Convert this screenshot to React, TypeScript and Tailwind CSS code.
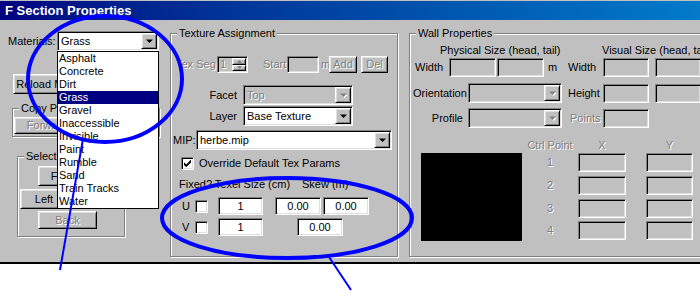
const sunken =
  "border border-t-[#808080] border-l-[#808080] border-r-white border-b-white shadow-[inset_1px_1px_0_#000,inset_-1px_-1px_0_#dfdfdf]";
const raised =
  "border border-t-white border-l-white border-r-black border-b-black shadow-[inset_1px_1px_0_#dfdfdf,inset_-1px_-1px_0_#808080]";
const etched = "border border-[#808080] shadow-[inset_1px_1px_0_#fff,1px_1px_0_#fff]";
const dim = "text-[#808080] [text-shadow:1px_1px_0_#fff]";

const materials = [
  "Asphalt",
  "Concrete",
  "Dirt",
  "Grass",
  "Gravel",
  "Inaccessible",
  "Invisible",
  "Paint",
  "Rumble",
  "Sand",
  "Train Tracks",
  "Water",
];

const Tri = ({ off, up }: { off?: boolean; up?: boolean }) => (
  <svg width="7" height="5" viewBox="0 0 7 5" className="block">
    {off && <path d={up ? "M4.5 1L8 4.5H1z" : "M1 1.5h7L4.5 5z"} fill="#fff" />}
    <path d={up ? "M3.5 0L7 3.5H0z" : "M0 0.5h7L3.5 4z"} fill={off ? "#808080" : "#000"} />
  </svg>
);

const Combo = ({ text, off, className = "" }: { text: string; off?: boolean; className?: string }) => (
  <div className={`flex h-[20px] p-px ${sunken} ${off ? "bg-[#c0c0c0]" : "bg-white"} ${className}`}>
    <span className={`flex-1 truncate pl-[2px] leading-[16px] ${off ? dim : ""}`}>{text}</span>
    <div className={`flex w-[16px] items-center justify-center ${raised} bg-[#c0c0c0]`}>
      <Tri off={off} />
    </div>
  </div>
);

const Edit = ({ value = "", off, className = "" }: { value?: string; off?: boolean; className?: string }) => (
  <div
    className={`flex items-center justify-center ${sunken} ${off ? "bg-[#c0c0c0]" : "bg-white"} ${className}`}
  >
    {value}
  </div>
);

const Btn = ({ label, off, className = "" }: { label: string; off?: boolean; className?: string }) => (
  <div className={`flex items-center justify-center bg-[#c0c0c0] ${raised} ${off ? dim : ""} ${className}`}>
    {label}
  </div>
);

const Check = ({ on }: { on?: boolean }) => (
  <div className={`flex h-[13px] w-[13px] shrink-0 items-center justify-center bg-white ${sunken}`}>
    {on && (
      <svg width="7" height="7" viewBox="0 0 7 7">
        <path d="M0 2.2L2.2 4.4 7 -0.4V2.4L2.2 7.2 0 5z" fill="#000" />
      </svg>
    )}
  </div>
);

const Group = ({ label, className = "", children }: { label: string; className?: string; children: React.ReactNode }) => (
  <div className={`relative shrink-0 ${etched} ${className}`}>
    <span className="absolute left-[6px] top-[-7px] bg-[#c0c0c0] px-[2px] leading-[13px] whitespace-nowrap">
      {label}
    </span>
    {children}
  </div>
);

export default function App() {
  return (
    <div className="relative h-[306px] w-[700px] overflow-hidden bg-white font-['Liberation_Sans',Arial,sans-serif] text-[11px] leading-[13px] text-black">
      <div className="w-[760px] bg-[#c0c0c0] pt-px">
        <div className="flex h-[19px] items-center bg-linear-to-r from-[#000080] to-[#1084d0] pl-[5px] text-[13px] font-bold text-white">
          F Section Properties
        </div>

        <div className="flex h-[244px] border-b-2 border-black">
          {/* left column */}
          <div className="flex w-[170px] shrink-0 flex-col">
            <div className="mt-[11px] flex h-[20px] items-center">
              <span className="ml-[8px] w-[49px]">Materials:</span>
              <div className="relative w-[102px]">
                <Combo text="Grass" />
                <div className="absolute left-0 top-full z-10 w-full border border-black bg-white">
                  {materials.map((m) => (
                    <div
                      key={m}
                      className={`h-[13px] pl-px leading-[13px] whitespace-nowrap ${
                        m === "Grass" ? "bg-[#000080] text-white" : ""
                      }`}
                    >
                      {m}
                    </div>
                  ))}
                </div>
              </div>
            </div>

            <Btn label="Reload Materials" className="ml-[13px] mt-[23px] h-[20px] w-[89px]" />

            <Group label="Copy Properties" className="ml-[12px] mt-[14px] h-[29px] w-[148px]">
              <div className="flex pl-px pt-[8px]">
                <Btn label="Forward" off className="h-[17px] w-[66px]" />
                <Btn label="Backward" off className="h-[17px] w-[66px]" />
              </div>
            </Group>

            <Group label="Select Side" className="ml-[17px] mt-[19px] h-[81px] w-[108px]">
              <div className="flex flex-col pt-[9px]">
                <Btn label="Front" className="ml-[20px] h-[20px] w-[59px] pr-[8px]" />
                <div className="mt-[3px] flex pl-[2px]">
                  <Btn label="Left" className="h-[20px] w-[48px]" />
                  <Btn label="Right" className="h-[20px] w-[50px]" />
                </div>
                <Btn label="Back" off className="ml-[20px] mt-[2px] h-[18px] w-[59px]" />
              </div>
            </Group>
          </div>

          {/* texture assignment */}
          <Group label="Texture Assignment" className="mt-[13px] h-[224px] w-[228px]">
            <div className="flex flex-col">
              <div className="mt-[22px] flex h-[17px] items-center">
                <span className={`ml-[5px] w-[41px] ${dim}`}>Tex Seg</span>
                <div className={`flex h-[17px] w-[31px] p-px bg-[#c0c0c0] ${sunken}`}>
                  <span className={`flex-1 pl-px leading-[13px] ${dim}`}>1</span>
                  <div className="flex w-[14px] flex-col">
                    <div className={`flex flex-1 items-center justify-center ${raised}`}>
                      <svg width="5" height="3" viewBox="0 0 5 3"><path d="M2.5 0L5 3H0z" fill="#808080" /></svg>
                    </div>
                    <div className={`flex flex-1 items-center justify-center ${raised}`}>
                      <svg width="5" height="3" viewBox="0 0 5 3"><path d="M0 0h5L2.5 3z" fill="#808080" /></svg>
                    </div>
                  </div>
                </div>
                <span className={`ml-[15px] w-[24px] ${dim}`}>Start</span>
                <Edit off className="h-[17px] w-[32px]" />
                <span className={`ml-[2px] w-[8px] ${dim}`}>m</span>
                <Btn label="Add" off className="h-[17px] w-[28px]" />
                <Btn label="Del" off className="ml-[4px] h-[17px] w-[27px]" />
              </div>

              <div className="mt-[12px] flex h-[20px] items-center">
                <span className="w-[66px] text-right">Facet</span>
                <Combo text="Top" off className="ml-[6px] w-[110px]" />
              </div>
              <div className="mt-px flex h-[20px] items-center">
                <span className="w-[66px] text-right">Layer</span>
                <Combo text="Base Texture" className="ml-[6px] w-[110px]" />
              </div>
              <div className="mt-[4px] flex h-[20px] items-center">
                <span className="ml-[2px] w-[23px]">MIP:</span>
                <Combo text="herbe.mip" className="w-[196px]" />
              </div>

              <div className="mt-[7px] flex h-[13px] items-center">
                <div className="ml-[10px]">
                  <Check on />
                </div>
                <span className="ml-[5px] whitespace-nowrap">Override Default Tex Params</span>
              </div>

              <div className="mt-[8px] flex h-[13px] items-center whitespace-nowrap">
                <span className="ml-[8px] w-[123px]">Fixed? Texel Size (cm)</span>
                <span>Skew (m)</span>
              </div>

              <div className="mt-[6px] flex h-[18px] items-center">
                <span className="ml-[11px] w-[13px]">U</span>
                <Check />
                <Edit value="1" className="ml-[10px] h-[18px] w-[45px]" />
                <Edit value="0.00" className="ml-[12px] h-[18px] w-[46px]" />
                <Edit value="0.00" className="ml-[2px] h-[18px] w-[46px]" />
              </div>
              <div className="mt-[3px] flex h-[18px] items-center">
                <span className="ml-[11px] w-[13px]">V</span>
                <Check />
                <Edit value="1" className="ml-[10px] h-[18px] w-[45px]" />
                <Edit value="0.00" className="ml-[34px] h-[18px] w-[46px]" />
              </div>
            </div>
          </Group>

          {/* wall properties */}
          <Group label="Wall Properties" className="ml-[11px] mt-[13px] h-[224px] w-[360px]">
            <div className="flex flex-col">
              <div className="mt-[10px] flex h-[13px] items-center whitespace-nowrap">
                <span className="ml-[30px] w-[162px]">Physical Size (head, tail)</span>
                <span>Visual Size (head, tail)</span>
              </div>

              <div className="mt-px flex h-[19px] items-center">
                <span className="ml-[5px] w-[34px]">Width</span>
                <Edit off className="h-[19px] w-[47px]" />
                <Edit off className="ml-px h-[19px] w-[47px]" />
                <span className="ml-[4px] w-[20px]">m</span>
                <span className="w-[35px]">Width</span>
                <Edit off className="h-[19px] w-[46px]" />
                <Edit off className="ml-[6px] h-[19px] w-[46px]" />
              </div>

              <div className="mt-[6px] flex h-[20px] items-center">
                <span className="ml-[3px] w-[55px]">Orientation</span>
                <Combo text="" off className="w-[94px]" />
                <span className="ml-[6px] w-[35px]">Height</span>
                <Edit off className="h-[19px] w-[46px]" />
                <Edit off className="ml-[6px] h-[19px] w-[46px]" />
              </div>

              <div className="mt-[5px] flex h-[20px] items-center">
                <span className="w-[53px] text-right">Profile</span>
                <Combo text="" off className="ml-[5px] w-[94px]" />
                <span className={`ml-[8px] w-[33px] ${dim}`}>Points</span>
                <Edit off className="h-[19px] w-[46px]" />
              </div>

              <div className="mt-[11px] flex">
                <div className="ml-[11px] mt-[14px] h-[88px] w-[101px] bg-black" />
                <div className="flex flex-col">
                  <div className={`flex h-[13px] items-center whitespace-nowrap ${dim}`}>
                    <span className="w-[56px] text-center">Ctrl Point</span>
                    <span className="w-[48px] text-center">X</span>
                    <span className="ml-[20px] w-[47px] text-center">Y</span>
                  </div>
                  {["1", "2", "3", "4"].map((n, i) => (
                    <div key={n} className={`flex h-[19px] items-center ${i === 3 ? "mt-[3px]" : i === 0 ? "mt-px" : "mt-[4px]"}`}>
                      <span className={`w-[56px] text-center ${dim}`}>{n}</span>
                      <Edit off className="h-[19px] w-[48px]" />
                      <Edit off className="ml-[20px] h-[19px] w-[47px]" />
                    </div>
                  ))}
                </div>
              </div>
            </div>
          </Group>
        </div>
      </div>

      {/* hand-drawn annotations */}
      <svg className="pointer-events-none absolute inset-0 z-20" width="700" height="306">
        <ellipse cx="105" cy="79" rx="77" ry="63" fill="none" stroke="#0000ff" strokeWidth="4" />
        <ellipse cx="287" cy="218" rx="125" ry="40" fill="none" stroke="#0000ff" strokeWidth="4" />
        <line x1="83" y1="139" x2="60" y2="270" stroke="#0000ff" strokeWidth="2" />
        <line x1="329" y1="257" x2="351" y2="290" stroke="#0000ff" strokeWidth="2" />
      </svg>
    </div>
  );
}
